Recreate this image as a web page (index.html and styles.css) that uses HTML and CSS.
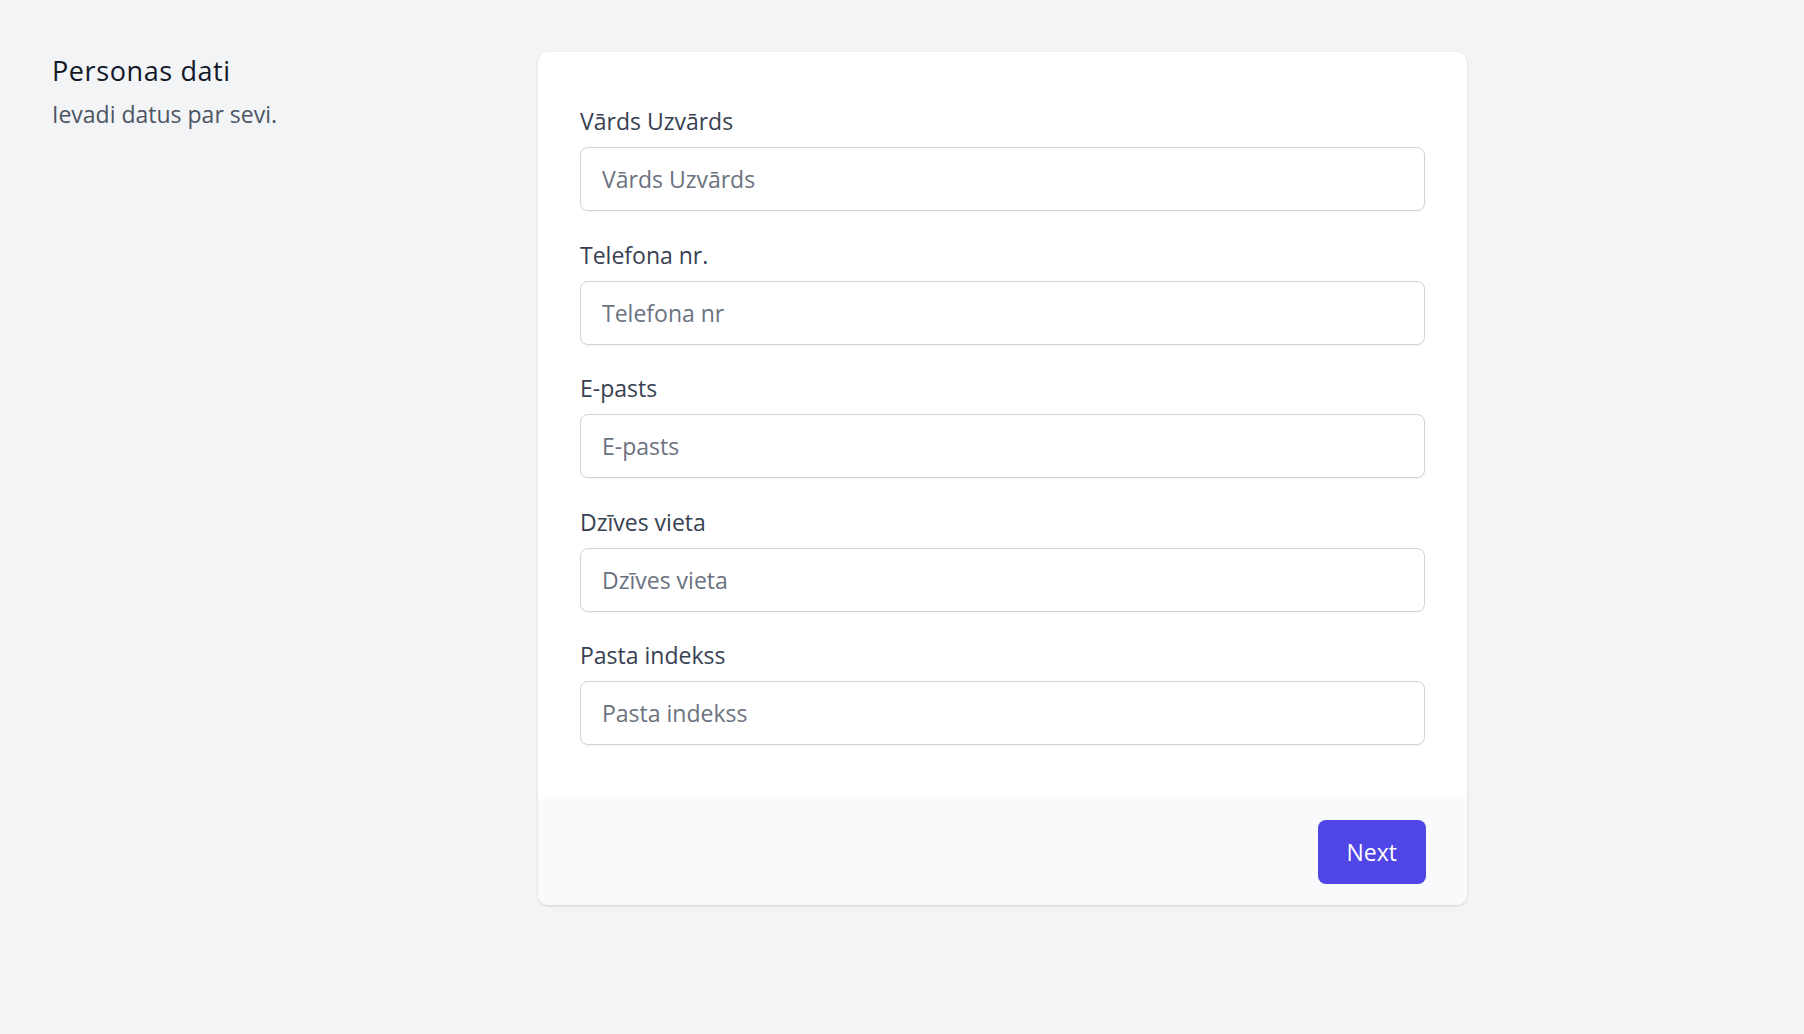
FILE: index.html
```html
<!DOCTYPE html>
<html lang="lv">
<head>
<meta charset="utf-8">
<title>Personas dati</title>
<link rel="stylesheet" href="styles.css">
</head>
<body>
<div class="page">
  <div class="intro">
    <h2 class="intro-title">Personas dati</h2>
    <p class="intro-text">Ievadi datus par sevi.</p>
  </div>
  <form class="card">
    <div class="card-body">
      <div class="field">
        <label class="field-label" for="name">Vārds Uzvārds</label>
        <input class="field-input" id="name" type="text" placeholder="Vārds Uzvārds">
      </div>
      <div class="field">
        <label class="field-label" for="phone">Telefona nr.</label>
        <input class="field-input" id="phone" type="text" placeholder="Telefona nr">
      </div>
      <div class="field">
        <label class="field-label" for="email">E-pasts</label>
        <input class="field-input" id="email" type="text" placeholder="E-pasts">
      </div>
      <div class="field">
        <label class="field-label" for="city">Dzīves vieta</label>
        <input class="field-input" id="city" type="text" placeholder="Dzīves vieta">
      </div>
      <div class="field">
        <label class="field-label" for="zip">Pasta indekss</label>
        <input class="field-input" id="zip" type="text" placeholder="Pasta indekss">
      </div>
    </div>
    <div class="card-footer">
      <button class="btn-next" type="button">Next</button>
    </div>
  </form>
</div>
</body>
</html>
```

FILE: styles.css
```css
* { box-sizing: border-box; }

html, body {
  margin: 0;
  padding: 0;
}

body {
  background: #f3f4f6;
  font-family: "Open Sans", "Noto Sans", sans-serif;
  min-height: 1034px;
}

.page {
  display: flex;
  align-items: flex-start;
  padding: 52px 0 0 52px;
}

.intro {
  width: 486px;
  flex-shrink: 0;
  padding-top: 1px;
}

.intro-title {
  margin: 0;
  font-size: 27px;
  line-height: 36px;
  font-weight: 400;
  letter-spacing: 0.6px;
  color: #111827;
}

.intro-text {
  margin: 9px 0 0;
  font-size: 23px;
  line-height: 32px;
  color: #4b5563;
}

.card {
  width: 929px;
  background: #ffffff;
  border-radius: 10px;
  box-shadow: 0 1px 3px rgba(0, 0, 0, 0.1), 0 1px 2px rgba(0, 0, 0, 0.06);
  overflow: hidden;
  margin: 0;
}

.card-body {
  padding: 53px 42px 54px;
  display: flex;
  flex-direction: column;
  gap: 27.5px;
}

.field {
  display: flex;
  flex-direction: column;
}

.field-label {
  font-size: 23px;
  line-height: 32px;
  color: #374151;
  margin-bottom: 10px;
}

.field-input {
  display: block;
  width: 100%;
  height: 64px;
  padding: 15px 21px;
  border: 1px solid #d1d5db;
  border-radius: 8px;
  box-shadow: 0 1px 2px rgba(0, 0, 0, 0.05);
  font-family: inherit;
  font-size: 23px;
  line-height: 32px;
  color: #111827;
  background: #fff;
  outline: none;
}

.field-input::placeholder {
  color: #6b7280;
  opacity: 1;
}

.card-footer {
  background: #f9fafb;
  padding: 21px 41px;
  display: flex;
  justify-content: flex-end;
}

.btn-next {
  height: 64px;
  padding: 0 29px;
  border: none;
  border-radius: 8px;
  background: #4f46e5;
  color: #ffffff;
  font-family: inherit;
  font-size: 23px;
  line-height: 32px;
  cursor: pointer;
}
```
